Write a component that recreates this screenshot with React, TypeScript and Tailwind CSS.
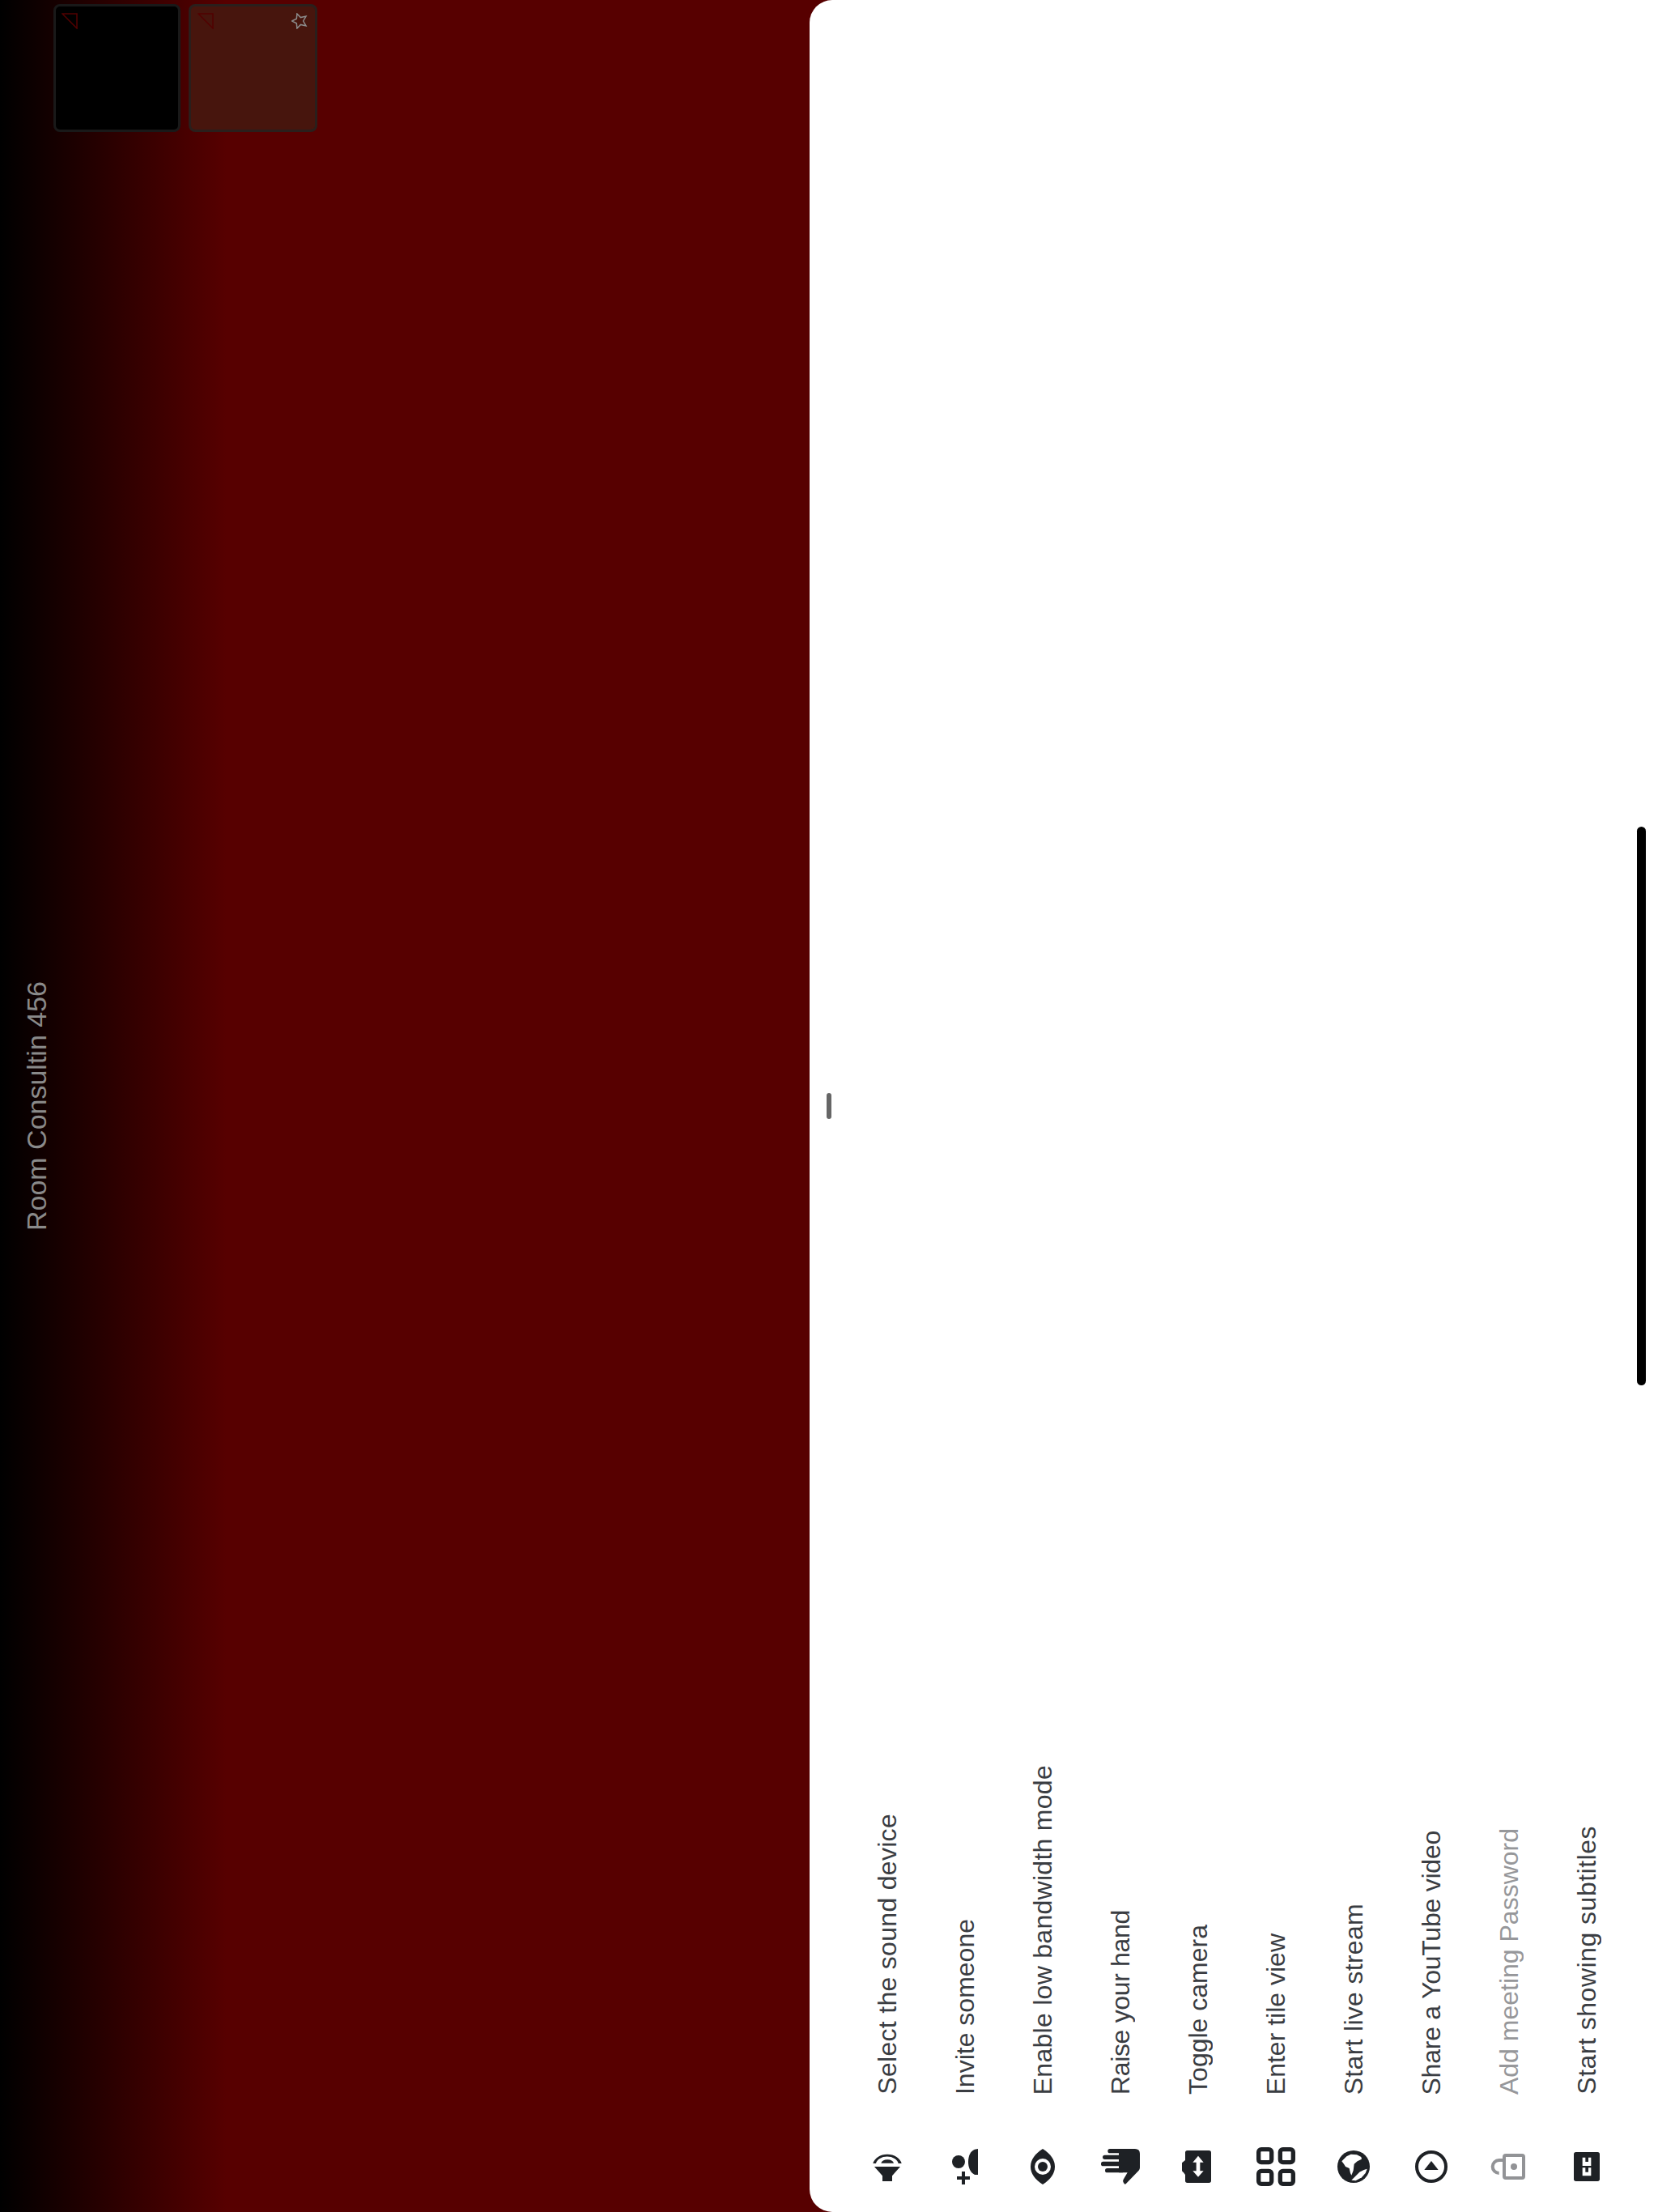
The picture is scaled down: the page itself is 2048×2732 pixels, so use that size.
import React from 'react'

const dark = '#1e2125'
const grey = '#929396'

// icons are drawn on a 144 unit grid, shown at 48px
const Icon = ({ children }: { children: React.ReactNode }) => (
  <svg viewBox="0 0 144 144" className="w-12 h-12 flex-none">
    {children}
  </svg>
)

const SoundIcon = () => (
  <Icon>
    <path fill={dark} d="M19 60 A54 42 0 0 1 125 60 H113 A42 30 0 0 0 30 60 Z" />
    <path fill={dark} d="M49 59 A24 17 0 0 1 96 59 Z" />
    <path fill={dark} d="M24 72 H120 L90 106 V126 H54 V106 Z" />
  </Icon>
)

const InviteIcon = () => (
  <Icon>
    <circle cx="48" cy="54" r="24" fill={dark} />
    <path fill={dark} d="M42 108 H60 V90 H72 V108 H90 V120 H72 V138 H60 V120 H42 Z" />
    <path fill={dark} d="M120 6 V102 H108 C92 94 84 76 84 54 C84 32 92 14 108 8 Z" />
  </Icon>
)

const EyeIcon = () => (
  <Icon>
    <path fill={dark} d="M72 6 C100 24 117 46 117 72 C117 98 100 120 72 138 C44 120 27 98 27 72 C27 46 44 24 72 6 Z" />
    <circle cx="72" cy="72" r="30" fill="#fff" />
    <circle cx="72" cy="72" r="18" fill={dark} />
  </Icon>
)

const HandIcon = () => (
  <Icon>
    <rect x="25" y="6" width="60" height="16" rx="8" fill={dark} />
    <rect x="6" y="29" width="80" height="16" rx="8" fill={dark} />
    <rect x="0" y="53" width="80" height="17" rx="8" fill={dark} />
    <rect x="15" y="78" width="70" height="16" rx="8" fill={dark} />
    <path fill={dark} d="M66 6 H126 Q144 6 144 24 V76 Q144 82 140 86 L92 136 Q88 140 84 132 L82 128 Q80 124 84 118 L98 94 H66 Z" />
  </Icon>
)

const CameraIcon = () => (
  <Icon>
    <path fill={dark} d="M32 12 H112 Q120 12 120 20 V124 Q120 132 112 132 H32 Q24 132 24 124 V102 L18 94 Q12 90 12 86 V58 L24 48 V20 Q24 12 32 12 Z" />
    <path fill="#fff" d="M72 32 L92 56 H79 V88 H92 L72 110 L52 88 H65 V56 H52 Z" />
  </Icon>
)

const TileIcon = () => (
  <Icon>
    <rect x="8" y="8" width="48" height="48" rx="10" fill="none" stroke={dark} strokeWidth="16" />
    <rect x="88" y="8" width="48" height="48" rx="10" fill="none" stroke={dark} strokeWidth="16" />
    <rect x="8" y="88" width="48" height="48" rx="10" fill="none" stroke={dark} strokeWidth="16" />
    <rect x="88" y="88" width="48" height="48" rx="10" fill="none" stroke={dark} strokeWidth="16" />
  </Icon>
)

const GlobeIcon = () => (
  <Icon>
    <circle cx="72" cy="72" r="60" fill={dark} />
    <path fill="#fff" d="M28 52 L46 34 L62 26 L84 28 L100 36 L102 44 L86 52 L74 62 L71 86 L64 104 L60 96 L56 78 L42 72 L36 62 Z" />
    <path fill="#fff" d="M64 122 L94 92 L110 84 L122 80 L116 96 L102 112 L80 124 Z" />
  </Icon>
)

const YoutubeIcon = () => (
  <Icon>
    <circle cx="72" cy="72" r="54" fill="none" stroke={dark} strokeWidth="12" />
    <path fill={dark} d="M72 51 L98 84 H46 Z" />
  </Icon>
)

const LockIcon = () => (
  <Icon>
    <rect x="54" y="30" width="72" height="84" rx="6" fill="none" stroke={grey} strokeWidth="12" />
    <circle cx="90" cy="72" r="12" fill={grey} />
    <path fill="none" stroke={grey} strokeWidth="12" d="M48 48 H35 A24 24 0 0 0 35 96" />
  </Icon>
)

const SubtitlesIcon = () => (
  <Icon>
    <rect x="24" y="18" width="96" height="108" rx="8" fill={dark} />
    <path fill="#fff" d="M56 38 H67 V54 H78 V38 H88 V69 H56 Z" />
    <path fill="#fff" d="M56 76 H67 V92 H78 V76 H88 V106 H56 Z" />
  </Icon>
)

const items = [
  { label: 'Select the sound device', icon: <SoundIcon />, tracking: 'tracking-[0.3px]' },
  { label: 'Invite someone', icon: <InviteIcon />, tracking: '' },
  { label: 'Enable low bandwidth mode', icon: <EyeIcon />, tracking: 'tracking-[0.28px]' },
  { label: 'Raise your hand', icon: <HandIcon />, tracking: 'tracking-[-0.33px]' },
  { label: 'Toggle camera', icon: <CameraIcon />, tracking: '' },
  { label: 'Enter tile view', icon: <TileIcon />, tracking: '' },
  { label: 'Start live stream', icon: <GlobeIcon />, tracking: 'tracking-[0.3px]' },
  { label: 'Share a YouTube video', icon: <YoutubeIcon />, tracking: 'tracking-[-0.24px]' },
  { label: 'Add meeting Password', icon: <LockIcon />, tracking: '', disabled: true },
  { label: 'Start showing subtitles', icon: <SubtitlesIcon />, tracking: 'tracking-[0.5px]' },
]

const CornerMark = () => (
  <svg viewBox="0 0 20 20" className="w-5 h-5">
    <path d="M1 1 H19 V19 Z" fill="none" stroke="#520000" strokeWidth="1.5" />
  </svg>
)

export default function App() {
  return (
    <div className="flex w-[2048px] h-[2732px] overflow-hidden bg-[#570000] font-['Liberation_Sans',Arial,sans-serif]">
      <div className="flex w-[1000px] flex-none bg-[linear-gradient(to_right,#000_0,#570000_280px)]">
        <div className="flex w-[66px] flex-none items-center justify-center pl-[24px]">
          <span className="[writing-mode:vertical-rl] rotate-180 text-[34px] leading-none text-[#8a8a8a] whitespace-nowrap">
            Room Consultin 456
          </span>
        </div>
        <div className="flex items-start gap-[10px] pt-[5px]">
          <div className="w-[157px] h-[158px] rounded-lg border-[3px] border-[#191919] bg-black pt-[8px] pl-[7px]">
            <CornerMark />
          </div>
          <div className="flex justify-between w-[159px] h-[158px] rounded-lg border-[3px] border-[#2a1f1c] bg-[#47150d] pt-[8px] pl-[8px] pr-[9px]">
            <CornerMark />
            <svg viewBox="0 0 20 20" className="w-5 h-5">
              <path
                d="M0.5 10 L6.3 7.3 L6.9 1 L11.4 5.6 L18 4.1 L14.6 10 L18 15.9 L11.4 14.4 L6.9 19 L6.3 12.7 Z"
                fill="none"
                stroke="#8c8c8c"
                strokeWidth="1.5"
              />
            </svg>
          </div>
        </div>
      </div>
      <div className="relative flex flex-1 items-end pl-[48px] pb-[32px] bg-white rounded-l-[28px]">
        <div className="absolute left-[21px] top-[1350px] w-[6px] h-[32px] rounded-full bg-[#666666]" />
        <div className="absolute left-[1022px] top-[1021px] w-[11px] h-[690px] rounded-full bg-black" />
        {items.map((item) => (
          <div key={item.label} className="flex w-[96px] flex-none flex-col items-center gap-[65px]">
            <span
              className={
                '[writing-mode:vertical-rl] rotate-180 text-[32px] leading-none whitespace-nowrap ' +
                item.tracking +
                ' ' +
                (item.disabled ? 'text-[#96979a]' : 'text-[#3a3d42]')
              }
            >
              {item.label}
            </span>
            {item.icon}
          </div>
        ))}
      </div>
    </div>
  )
}
